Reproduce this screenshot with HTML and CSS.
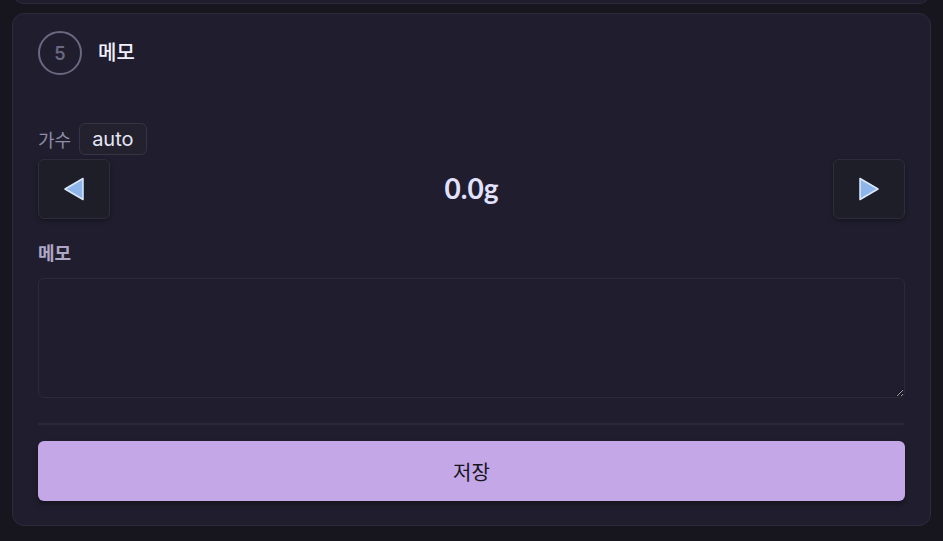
FILE: index.html
```html
<!DOCTYPE html>
<html lang="ko">
<head>
<meta charset="utf-8">
<link rel="stylesheet" href="styles.css">
</head>
<body>
<div class="prev-card"></div>
<section class="card">
  <div class="head">
    <div class="step">5</div>
    <div class="title">메모</div>
  </div>
  <div class="singer-row">
    <span class="singer-label">가수</span>
    <span class="badge">auto</span>
  </div>
  <div class="stepper">
    <button class="arrow-btn" type="button">
      <svg width="24" height="26" viewBox="0 0 24 26"><path d="M21 2.5 L3 13 L21 23.5 Z" fill="#8fb6ea" stroke="#dbe8fb" stroke-width="1.5" stroke-linejoin="round"/></svg>
    </button>
    <div class="value">0.0g</div>
    <button class="arrow-btn" type="button">
      <svg width="24" height="26" viewBox="0 0 24 26"><path d="M3 2.5 L21 13 L3 23.5 Z" fill="#8fb6ea" stroke="#dbe8fb" stroke-width="1.5" stroke-linejoin="round"/></svg>
    </button>
  </div>
  <div class="memo-label">메모</div>
  <textarea class="memo"></textarea>
  <div class="divider"></div>
  <button class="save" type="button">저장</button>
</section>
</body>
</html>
```
FILE: styles.css
```css
html, body {
  margin: 0;
  padding: 0;
  background: #17161f;
  font-family: "Noto Sans CJK KR", "Noto Sans", sans-serif;
}
body {
  width: 943px;
  height: 541px;
  overflow: hidden;
}
.prev-card {
  height: 40px;
  margin: -38px 12px 0;
  border: 1px solid #2b2a3a;
  border-radius: 12px;
  background: #201e2e;
}
.card {
  margin: 9px 12px 0;
  border: 1px solid #2c2b3b;
  border-radius: 12px;
  background: #201e2e;
  padding: 17px 25px 24px;
  display: flex;
  flex-direction: column;
}
.head {
  display: flex;
  align-items: center;
  gap: 16px;
  height: 44px;
}
.step {
  width: 44px;
  height: 44px;
  box-sizing: border-box;
  border: 2.5px solid #6a6780;
  border-radius: 50%;
  display: flex;
  align-items: center;
  justify-content: center;
  color: #6a6780;
  font-family: "Inter", sans-serif;
  font-weight: 600;
  font-size: 18px;
}
.title {
  color: #f2f0ff;
  font-size: 20px;
  font-weight: 500;
  line-height: 26px;
  margin-top: -3px;
}
.singer-row {
  margin-top: 48px;
  display: flex;
  align-items: center;
  gap: 8px;
  height: 32px;
}
.singer-label {
  color: #8f8ca6;
  font-size: 18px;
  line-height: 24px;
}
.badge {
  box-sizing: border-box;
  height: 32px;
  padding: 0 12px;
  display: flex;
  align-items: center;
  border: 1px solid #353444;
  border-radius: 6px;
  background: #22212d;
  color: #e6e6f5;
  font-family: "Inter", sans-serif;
  font-size: 20px;
}
.stepper {
  margin-top: 4px;
  display: flex;
  align-items: center;
  justify-content: space-between;
}
.arrow-btn {
  width: 72px;
  height: 60px;
  box-sizing: border-box;
  border: 1px solid #2e2d3b;
  border-radius: 6px;
  background: #1e1e29;
  box-shadow: 0 2px 4px rgba(0, 0, 0, 0.35);
  display: flex;
  align-items: center;
  justify-content: center;
  padding: 0;
}
.value {
  color: #e2e2ff;
  font-family: "Lato", sans-serif;
  font-weight: 700;
  font-size: 28px;
  margin-top: -2px;
}
.memo-label {
  margin-top: 20px;
  color: #b0a6c8;
  font-size: 18px;
  font-weight: 700;
  line-height: 26px;
}
.memo {
  margin-top: 13px;
  height: 120px;
  width: 100%;
  box-sizing: border-box;
  border: 1px solid #2b2a3a;
  border-radius: 6px;
  background: #201e2e;
  color-scheme: dark;
  color: #e6e6f5;
  font-size: 16px;
  outline: none;
  display: block;
}
.divider {
  margin-top: 25px;
  height: 2px;
  background: #29283a;
}
.save {
  margin-top: 16px;
  height: 60px;
  width: 100%;
  border: none;
  border-radius: 6px;
  background: #c4a7e7;
  color: #16151c;
  font-family: "Noto Sans CJK KR", sans-serif;
  font-size: 20px;
  box-shadow: 0 3px 5px rgba(0, 0, 0, 0.35);
}
```
